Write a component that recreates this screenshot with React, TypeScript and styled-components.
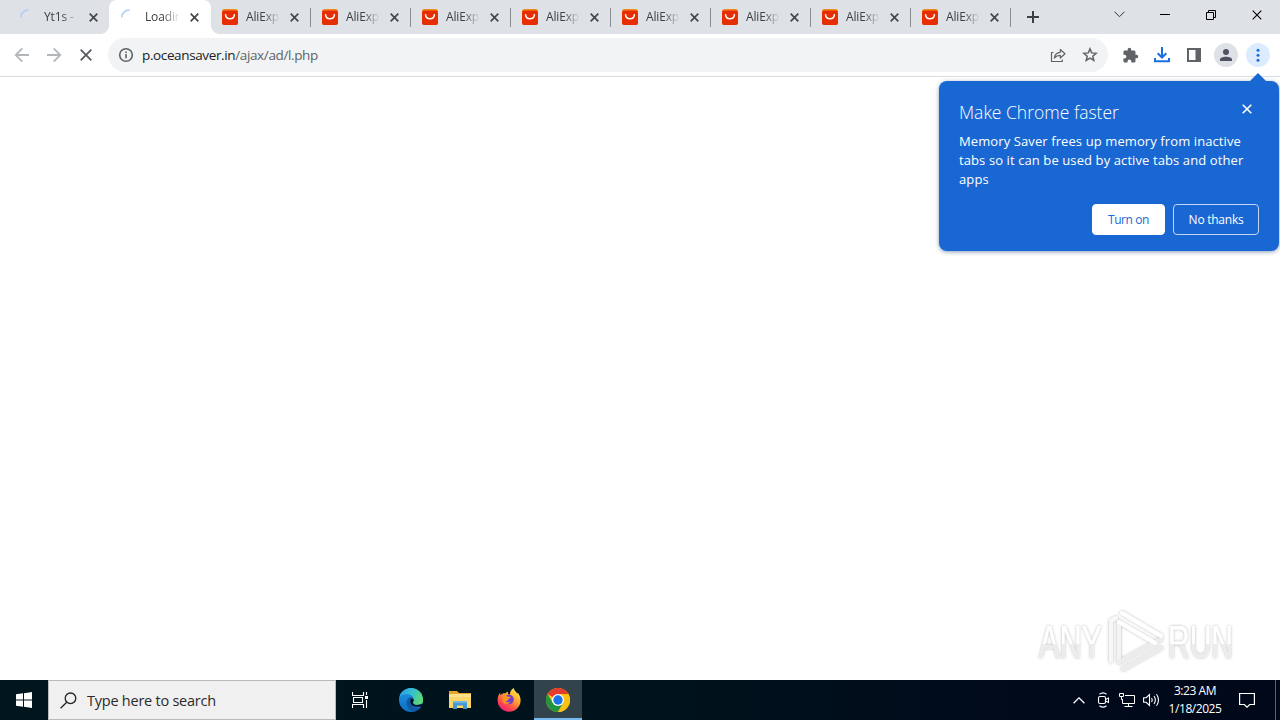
import React from 'react';
import styled, { createGlobalStyle, css } from 'styled-components';

const colors = {
  strip: '#dee1e6',
  field: '#f1f3f4',
  icon: '#5f6368',
  text: '#3c4043',
  blue: '#1a6fe0',
  bubble: '#1967d2',
};

const GlobalStyle = createGlobalStyle`
  * { box-sizing: border-box; }
  body {
    margin: 0;
    overflow: hidden;
    font-family: 'Open Sans', 'Noto Sans', sans-serif;
  }
  svg { display: block; flex-shrink: 0; }
  button { font-family: inherit; padding: 0; border: 0; background: none; }
`;

const Desktop = styled.div`
  position: relative;
  display: flex;
  flex-direction: column;
  width: 1280px;
  height: 720px;
  background: #fff;
  overflow: hidden;
`;

const TabStrip = styled.header`
  display: flex;
  height: 34px;
  padding-left: 9px;
  background: ${colors.strip};
`;

const TabItem = styled.div<{ $active?: boolean; $divider?: boolean; $width?: number }>`
  position: relative;
  display: flex;
  align-items: center;
  width: ${({ $width }) => $width ?? 100}px;
  padding: 0 0 0 ${({ $divider }) => ($divider ? 12 : 11)}px;
  color: ${colors.text};

  ${({ $divider }) =>
    $divider &&
    css`
      &::after {
        content: '';
        position: absolute;
        right: -1px;
        top: 8px;
        width: 1px;
        height: 19px;
        background: #868b90;
      }
    `}

  ${({ $active }) =>
    $active &&
    css`
      background: #fff;
      border-radius: 8px 8px 0 0;
      box-shadow: -1px 0 0 #fff, 1px 0 0 #fff;

      &::before,
      &::after {
        content: '';
        position: absolute;
        bottom: 0;
        width: 8px;
        height: 8px;
      }
      &::before {
        left: -9px;
        background: radial-gradient(circle at 0 0, transparent 7.5px, #fff 8px);
      }
      &::after {
        right: -9px;
        background: radial-gradient(circle at 100% 0, transparent 7.5px, #fff 8px);
      }
    `}
`;

const TabTitle = styled.span<{ $wide?: boolean }>`
  width: ${({ $wide }) => ($wide ? 35 : 34)}px;
  margin: 0 10px 0 8px;
  overflow: hidden;
  white-space: nowrap;
  font-size: 12px;
  line-height: 16px;
  letter-spacing: -0.15px;
  mask-image: linear-gradient(90deg, #000 50%, transparent 100%);
`;

const NewTab = styled.button`
  display: flex;
  align-items: center;
  justify-content: center;
  width: 46px;
`;

const WindowControls = styled.div`
  display: flex;
  margin-left: auto;
  height: 29px;
`;

const WindowButton = styled.button`
  display: flex;
  align-items: center;
  justify-content: center;
  width: 46px;
`;

const Toolbar = styled.div`
  display: flex;
  align-items: center;
  height: 43px;
  padding: 0 6px;
  border-bottom: 1px solid #dadce0;
`;

const ToolButton = styled.button<{ $fill?: string }>`
  display: flex;
  align-items: center;
  justify-content: center;
  width: 32px;
  height: 32px;

  ${({ $fill }) =>
    $fill &&
    css`
      width: 24px;
      height: 24px;
      margin: 0 4px;
      border-radius: 50%;
      background: ${$fill};
    `}
`;

const AddressBar = styled.div`
  display: flex;
  align-items: center;
  width: 1000px;
  height: 34px;
  margin: 0 6px;
  padding: 0 2px 0 10px;
  border-radius: 17px;
  background: ${colors.field};
`;

const Url = styled.span`
  flex: 1;
  margin-left: 8px;
  font-size: 13.5px;
  line-height: 20px;
  letter-spacing: -0.37px;
  color: ${colors.icon};

  b {
    font-weight: 400;
    color: #202124;
  }
`;

const Page = styled.main`
  flex: 1;
`;

const Bubble = styled.aside`
  position: absolute;
  top: 81px;
  left: 939px;
  width: 340px;
  height: 170px;
  padding: 18px 20px 16px;
  border-radius: 8px;
  background: ${colors.bubble};
  box-shadow: 0 1px 4px rgba(25, 60, 120, 0.5);
  color: #fff;

  &::before {
    content: '';
    position: absolute;
    top: -8px;
    right: 13px;
    border: 8px solid transparent;
    border-top: 0;
    border-bottom-color: ${colors.bubble};
  }
`;

const BubbleHead = styled.div`
  display: flex;
  justify-content: space-between;
  padding-right: 7px;

  svg {
    margin-top: 5px;
  }
`;

const BubbleTitle = styled.h2`
  margin: 0;
  font-size: 17.5px;
  font-weight: 300;
  line-height: 26px;
  white-space: nowrap;
`;

const BubbleText = styled.p`
  margin: 7px -10px 0 0;
  font-size: 13px;
  line-height: 19px;
  letter-spacing: 0.1px;
  white-space: nowrap;
`;

const BubbleActions = styled.div`
  display: flex;
  justify-content: flex-end;
  gap: 8px;
  margin-top: 15px;
`;

const BubbleButton = styled.button<{ $primary?: boolean }>`
  width: ${({ $primary }) => ($primary ? 73 : 86)}px;
  height: 31px;
  border: 1px solid ${({ $primary }) => ($primary ? '#fff' : '#c3d7f5')};
  border-radius: 4px;
  background: ${({ $primary }) => ($primary ? '#fff' : 'transparent')};
  color: ${({ $primary }) => ($primary ? colors.bubble : '#fff')};
  font-size: 12px;
  letter-spacing: ${({ $primary }) => ($primary ? -0.4 : -0.25)}px;
  line-height: 28px;
  white-space: nowrap;
`;

const Watermark = styled.div`
  position: absolute;
  left: 1032px;
  top: 604px;
`;

const Taskbar = styled.footer`
  display: flex;
  height: 40px;
  background: linear-gradient(90deg, #00151d 0%, #00131c 50%, #000a1b 80%, #00081a 100%);
`;

const TaskButton = styled.button<{ $open?: boolean }>`
  display: flex;
  align-items: center;
  justify-content: center;
  width: ${({ $open }) => ($open ? 48 : 49)}px;
  height: 40px;
  background: ${({ $open }) => ($open ? '#33434b' : 'transparent')};
  box-shadow: ${({ $open }) => ($open ? 'inset 0 -2px 0 #76b9ed' : 'none')};
`;

const StartButton = styled(TaskButton)`
  width: 48px;
`;

const TaskViewButton = styled(TaskButton)`
  width: 48px;
  margin-right: 2px;
`;

const FirefoxButton = styled(TaskButton)`
  margin-right: 1px;
`;

const Search = styled.div`
  display: flex;
  align-items: center;
  width: 288px;
  height: 40px;
  padding-left: 11px;
  border: 1px solid #b9bbbc;
  background: #f0f0f0;
  color: #2b2b2b;
  font-size: 14.5px;
  letter-spacing: -0.24px;

  span {
    margin-left: 10px;
  }
`;

const Tray = styled.div`
  display: flex;
  align-items: center;
  width: 213px;
  margin-left: auto;
`;

const TrayIcon = styled.span<{ $width?: number }>`
  display: flex;
  justify-content: center;
  width: ${({ $width }) => $width ?? 24}px;
`;

const Clock = styled.time`
  width: 64px;
  color: #fff;
  font-size: 12px;
  line-height: 18px;
  letter-spacing: -0.45px;
  text-align: center;
  white-space: nowrap;
`;

const ShowDesktop = styled.span`
  width: 5px;
  height: 40px;
  margin-left: auto;
  border-left: 1px solid #5b626d;
`;

function Cross({ size = 9, color = '#45484c', weight = 1.7 }: { size?: number; color?: string; weight?: number }) {
  return (
    <svg width={size} height={size} viewBox={`0 0 ${size} ${size}`} stroke={color} strokeWidth={weight}>
      <path d={`M.7.7 ${size - 0.7} ${size - 0.7}M${size - 0.7}.7.7 ${size - 0.7}`} />
    </svg>
  );
}

function Spinner() {
  return (
    <svg width="16" height="16" fill="none" stroke="#b4cff6" strokeWidth="1.6">
      <path d="M.8 8.5A7 7 0 0 1 8.5 1.2" />
    </svg>
  );
}

function AliIcon() {
  return (
    <svg width="16" height="16">
      <rect width="16" height="16" rx="2.5" fill="#f28a1e" />
      <path d="M0 3.5Q0 1.6 2 1.6h12q2 0 2 1.9v10a2.5 2.5 0 0 1-2.5 2.5h-11A2.5 2.5 0 0 1 0 13.5Z" fill="#e62e04" />
      <path d="M3.6 5.800c.6 5.200 8.200 5.200 8.800 0" fill="none" stroke="#fff" strokeWidth="1.5" strokeLinecap="round" />
    </svg>
  );
}

function Arrow({ back }: { back?: boolean }) {
  return (
    <svg width="16" height="16" fill="none" stroke="#b4b7ba" strokeWidth="1.8">
      {back ? <path d="M15 8H2M8.3 1.4 1.7 8l6.6 6.6" /> : <path d="M1 8h13M7.7 1.4 14.3 8l-6.6 6.6" />}
    </svg>
  );
}

function EdgeIcon() {
  return (
    <svg width="24" height="24" viewBox="0 0 24 24">
      <defs>
        <linearGradient id="edgeTop" x1="0" y1=".3" x2="1" y2=".6">
          <stop offset="0" stopColor="#2a9fe6" />
          <stop offset=".5" stopColor="#35c0cf" />
          <stop offset="1" stopColor="#62d96a" />
        </linearGradient>
        <linearGradient id="edgeLow" x1="0" y1="0" x2="0" y2="1">
          <stop offset="0" stopColor="#1f98e4" />
          <stop offset="1" stopColor="#0f6cc2" />
        </linearGradient>
        <clipPath id="edgeDisc">
          <circle cx="12" cy="12" r="12" />
        </clipPath>
      </defs>
      <g clipPath="url(#edgeDisc)">
        <path d="M0 0h24v24H0Z" fill="url(#edgeLow)" />
        <path d="M12 9C8.5 10 7 13 7.8 16.5 8.8 21 12.5 24 17 24l6-4.5c-4 1.5-8.5.3-9.8-3C12 13.5 15 12 14.5 10Z" fill="#1259a5" />
        <path d="M0 10C2 5.5 10.5 4.5 13.5 8.5c1.800 2.500 1.200 4.800.3 6 1.500 3 5.700 3 10.200.5V0H0Z" fill="url(#edgeTop)" />
        <path d="M11.500 11.500c1-1.500 3.300-.8 3.300.8 0 1-.8 1.500-1 2.400.8 2.600 5 2.900 8.700 1.300l2-.5-1.300 2.500c-3.500 1.500-8.700 1-10.900-1.500-1-1.500-1.200-3.500-.8-5Z" fill="#00131c" />
      </g>
    </svg>
  );
}

function FolderIcon() {
  return (
    <svg width="22" height="20" viewBox="0 0 22 20">
      <path d="M0 1h8l2 2h12v4H0Z" fill="#e7a52b" />
      <path d="M0 4h22v14H0Z" fill="#fbd568" />
      <path d="M0 4h22v3H0Z" fill="#fde08a" />
      <path d="M4 19v-8h14v8h-4v-3.500H8V19Z" fill="#4596d3" />
      <path d="M4 11h14v2H4Z" fill="#6eb5e6" />
    </svg>
  );
}

function FirefoxIcon() {
  return (
    <svg width="24" height="24" viewBox="0 0 24 24">
      <defs>
        <linearGradient id="fox" x1=".85" y1="0" x2=".2" y2="1">
          <stop offset="0" stopColor="#fff04a" />
          <stop offset=".4" stopColor="#ffa52b" />
          <stop offset=".75" stopColor="#ff4150" />
          <stop offset="1" stopColor="#e51a83" />
        </linearGradient>
      </defs>
      <path d="M3.400 4.200c-.3 1.200-.2 2.200.1 3C5 5.800 6.400 5.200 8 5.400c1-.9 2-1.500 3-1.800-.4 1-.2 2 .7 2.800H13c-.3-2 1.100-4.500 3.700-6.300.4 2.500 2.200 3.400 3.400 5.300.4-.1.5-.5.5-1 1.900 2.300 3 5 3 8A11.500 11.500 0 1 1 .6 12c0-3 1-5.700 2.800-7.800Z" fill="url(#fox)" />
      <circle cx="12" cy="11.500" r="4.800" fill="#7040c8" />
      <path d="M6.100 8c2-.6 3.700-.5 5 .8 1 .1 2.200 0 2.700.4-.1 1.200-2.700 1.400-2.900 2.500 0 1.200-1.200 1.700-2.500 1.500 1 1.600 3.200 1 4.700.3-.7 3.300-5.900 3.400-7.500-.1-.8-1.700-.4-3.800.5-5.400Z" fill="#ff9225" />
    </svg>
  );
}

function ChromeIcon() {
  return (
    <svg width="24" height="24" viewBox="0 0 24 24">
      <circle cx="12" cy="12" r="12" fill="#fbc116" />
      <path d="M12 12 1.6 6A12 12 0 0 1 22.4 6Z" fill="#e33b2e" />
      <path d="M1.6 6A12 12 0 0 0 12 24l5.2-9L12 12 6.8 15Z" fill="#229342" />
      <path d="M22.4 6A12 12 0 0 1 12 24l5.2-9A6 6 0 0 0 17.2 9L12 6Z" fill="#fbc116" />
      <circle cx="12" cy="12" r="6" fill="#fff" />
      <circle cx="12" cy="12" r="4.7" fill="#1a73e8" />
    </svg>
  );
}

function AnyRunMark() {
  return (
    <svg width="210" height="74" viewBox="0 0 210 74">
      <defs>
        <linearGradient id="markFill" x1="0" y1="20" x2="0" y2="54" gradientUnits="userSpaceOnUse">
          <stop offset=".58" stopColor="#fff" />
          <stop offset=".6" stopColor="#ececec" />
        </linearGradient>
        <filter id="markShadow" x="-10%" y="-20%" width="120%" height="140%">
          <feDropShadow dx="0" dy="0" stdDeviation="1.5" floodColor="#000" floodOpacity=".3" />
        </filter>
      </defs>
      <g filter="url(#markShadow)" fontFamily="'Liberation Sans', sans-serif" fontSize="46" fill="url(#markFill)">
        <text x="7" y="54" textLength="63" lengthAdjust="spacingAndGlyphs">ANY</text>
        <text x="136" y="54" textLength="65" lengthAdjust="spacingAndGlyphs">RUN</text>
      </g>
      <g filter="url(#markShadow)" fill="none" strokeWidth="4" strokeLinejoin="round" strokeLinecap="round">
        <path d="m91 65 38-21" stroke="#ececec" />
        <path d="M79 57V17l5-3" stroke="#f7f7f7" />
        <path d="M87 58V18" stroke="#f3f3f3" />
        <path d="m87 58 42-23" stroke="#ececec" />
        <path d="m87 18 36 21" stroke="#fff" />
        <path d="M90 9 129 32" stroke="#fff" />
      </g>
    </svg>
  );
}

const aliTabs = Array.from({ length: 8 }, (_, i) => i);

export default function App() {
  return (
    <>
      <GlobalStyle />
      <Desktop>
        <TabStrip>
          <TabItem $width={101}>
            <Spinner />
            <TabTitle $wide>Yt1s - </TabTitle>
            <Cross />
          </TabItem>
          <TabItem $active>
            <Spinner />
            <TabTitle $wide>Loading</TabTitle>
            <Cross />
          </TabItem>
          {aliTabs.map((tab) => (
            <TabItem key={tab} $divider>
              <AliIcon />
              <TabTitle>AliExpress</TabTitle>
              <Cross />
            </TabItem>
          ))}
          <NewTab aria-label="New tab">
            <svg width="12" height="12" stroke="#3c4043" strokeWidth="2">
              <path d="M6 0v12M0 6h12" />
            </svg>
          </NewTab>
          <WindowControls>
            <WindowButton>
              <svg width="11" height="7" fill="none" stroke="#333">
                <path d="m.5.7 5 5 5-5" />
              </svg>
            </WindowButton>
            <WindowButton>
              <svg width="10" height="1">
                <path d="M0 0h10v1H0Z" />
              </svg>
            </WindowButton>
            <WindowButton>
              <svg width="10" height="10" fill="none" stroke="#000">
                <path d="M.5 2.5h7v7h-7ZM2.5 2.5V.5h7v7h-2" />
              </svg>
            </WindowButton>
            <WindowButton>
              <Cross size={10} color="#000" weight={1.1} />
            </WindowButton>
          </WindowControls>
        </TabStrip>

        <Toolbar>
          <ToolButton aria-label="Back">
            <Arrow back />
          </ToolButton>
          <ToolButton aria-label="Forward">
            <Arrow />
          </ToolButton>
          <ToolButton aria-label="Stop">
            <Cross size={12} color="#55595e" weight={1.7} />
          </ToolButton>
          <AddressBar>
            <svg width="16" height="16" fill="none" stroke={colors.icon} strokeWidth="1.6">
              <circle cx="8" cy="8" r="6.3" />
              <path d="M8 7v4.3M8 4.4V6" />
            </svg>
            <Url>
              <b>p.oceansaver.in</b>/ajax/ad/l.php
            </Url>
            <ToolButton aria-label="Share">
              <svg width="16" height="16" fill="none" stroke={colors.icon} strokeWidth="1.2" strokeLinejoin="round">
                <path d="M3.5 5.5H1.5v9h10.800v-2M4.300 11c.5-3.700 2.500-5.500 6-5.700V2.500l4.700 4.300-4.700 4.200V8.300C7.700 8.300 5.900 9.100 4.300 11Z" />
              </svg>
            </ToolButton>
            <ToolButton aria-label="Bookmark">
              <svg width="16" height="16" fill="none" stroke={colors.icon} strokeWidth="1.5">
                <path d="m8 1.900 1.700 4 4.400.4-3.300 2.900 1 4.300L8 11.200l-3.800 2.300 1-4.300L1.900 6.300l4.400-.4Z" />
              </svg>
            </ToolButton>
          </AddressBar>
          <ToolButton aria-label="Extensions">
            <svg width="17" height="17" viewBox="0 0 24 24" fill={colors.icon}>
              <path d="M20.500 11H19V7a2 2 0 0 0-2-2h-4V3.500a2.500 2.500 0 0 0-5 0V5H4a2 2 0 0 0-2 2v3.800h1.500a2.700 2.700 0 0 1 0 5.400H2V20a2 2 0 0 0 2 2h3.800v-1.500a2.700 2.700 0 0 1 5.400 0V22H17a2 2 0 0 0 2-2v-4h1.500a2.500 2.500 0 0 0 0-5Z" />
            </svg>
          </ToolButton>
          <ToolButton aria-label="Downloads">
            <svg width="16" height="16" fill="none" stroke={colors.blue} strokeWidth="2">
              <path d="M8 0v10M3.700 6.200 8 10.500l4.300-4.300M1 11v3.200h14V11" />
            </svg>
          </ToolButton>
          <ToolButton aria-label="Side panel">
            <svg width="14" height="14">
              <path d="M0 0h14v14H0ZM2 2v10h6.500V2Z" fill={colors.icon} fillRule="evenodd" />
            </svg>
          </ToolButton>
          <ToolButton $fill="#dee1e6" aria-label="Profile">
            <svg width="12" height="12" fill="#4d5363">
              <circle cx="6" cy="3" r="3" />
              <path d="M0 12v-1.500C0 6.800 12 6.800 12 10.500V12Z" />
            </svg>
          </ToolButton>
          <ToolButton $fill="#dcebfd" aria-label="Menu">
            <svg width="4" height="14" fill={colors.blue}>
              <circle cx="2" cy="2.200" r="1.500" />
              <circle cx="2" cy="7.200" r="1.500" />
              <circle cx="2" cy="12.200" r="1.500" />
            </svg>
          </ToolButton>
        </Toolbar>

        <Page />

        <Bubble>
          <BubbleHead>
            <BubbleTitle>Make Chrome faster</BubbleTitle>
            <Cross size={10} color="#fff" weight={1.6} />
          </BubbleHead>
          <BubbleText>
            Memory Saver frees up memory from inactive
            <br />
            tabs so it can be used by active tabs and other
            <br />
            apps
          </BubbleText>
          <BubbleActions>
            <BubbleButton $primary>Turn on</BubbleButton>
            <BubbleButton>No thanks</BubbleButton>
          </BubbleActions>
        </Bubble>

        <Watermark>
          <AnyRunMark />
        </Watermark>

        <Taskbar>
          <StartButton aria-label="Start">
            <svg width="16" height="16" fill="#fff">
              <path d="M0 2.300 7 1.300v6.200H0ZM8 1.200 16 0v7.500H8ZM0 8.500h7v6.200l-7-1ZM8 8.500h8V16l-8-1.200Z" />
            </svg>
          </StartButton>
          <Search>
            <svg width="17" height="17" fill="none" stroke="#222" strokeWidth="1.300">
              <circle cx="10.500" cy="6.300" r="5.300" />
              <path d="M6.700 10.200.6 16.200" />
            </svg>
            <span>Type here to search</span>
          </Search>
          <TaskViewButton aria-label="Task view">
            <svg width="17" height="16" fill="none" stroke="#fff" strokeWidth="1.100">
              <path d="M.5 0v3.500h11V0M.5 16v-3.500h11V16M1.500 5.500h9v5h-9ZM14.500 0v3M14.500 8v8" />
              <path d="M13 4h3v3h-3Z" fill="#fff" stroke="none" />
            </svg>
          </TaskViewButton>
          <TaskButton aria-label="Edge">
            <EdgeIcon />
          </TaskButton>
          <TaskButton aria-label="File Explorer">
            <FolderIcon />
          </TaskButton>
          <FirefoxButton aria-label="Firefox">
            <FirefoxIcon />
          </FirefoxButton>
          <TaskButton $open aria-label="Chrome">
            <ChromeIcon />
          </TaskButton>

          <Tray>
            <TrayIcon>
              <svg width="12" height="7" fill="none" stroke="#fff" strokeWidth="1.300">
                <path d="M.6 6.200 6 .9l5.400 5.300" />
              </svg>
            </TrayIcon>
            <TrayIcon>
              <svg width="12" height="16" fill="none" stroke="#fff" strokeWidth="1.100">
                <rect x="1.500" y="4.500" width="7" height="7" rx="1.500" />
                <path d="m8.500 7.500 3-1.500v4.500L8.500 9M2.500 2.300Q6-.5 9.500 2.300M2.500 13.700q3.500 2.800 7 0" />
              </svg>
            </TrayIcon>
            <TrayIcon>
              <svg width="17" height="14" fill="none" stroke="#fff">
                <path d="M6 2.500h9.500v8H3.500V6M9.500 10.500v3M5.500 13.500h8M.5.500h4v3h-4ZM2.500 3.500v3h1.500" />
              </svg>
            </TrayIcon>
            <TrayIcon>
              <svg width="17" height="14" fill="none" stroke="#fff" strokeWidth="1.100">
                <path d="M.6 4.700h2.600L6.500 1.500v11L3.200 9.300H.6ZM8.500 5q1.400 2 0 4M11 3q2.700 4 0 8M13.500 1.200q4 5.800 0 11.600" />
              </svg>
            </TrayIcon>
            <Clock>
              3:23 AM
              <br />
              1/18/2025
            </Clock>
            <TrayIcon $width={40}>
              <svg width="16" height="16" fill="none" stroke="#fff" strokeWidth="1.200">
                <path d="M.6 1.500h14.800v11h-4.700L8 15.200l-2.700-2.700H.6Z" />
              </svg>
            </TrayIcon>
            <ShowDesktop />
          </Tray>
        </Taskbar>
      </Desktop>
    </>
  );
}
